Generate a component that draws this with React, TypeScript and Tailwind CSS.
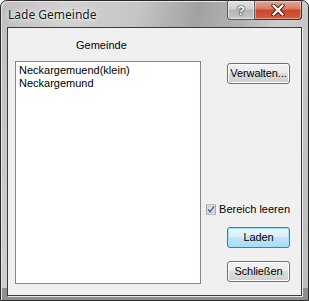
import React from 'react';

const font = { fontFamily: '"Liberation Sans", Arial, sans-serif' };

function WinButton({ label, primary }: { label: string; primary?: boolean }) {
  return (
    <button
      className={
        'flex h-[21px] w-[63px] items-center justify-center whitespace-nowrap rounded-[3px] border text-[11px] tracking-[-0.1px] text-black ' +
        (primary
          ? 'border-[#3c7fb1] bg-[linear-gradient(#eaf6fd_0%,#d9f0fc_45%,#bee6fd_50%,#a7d9f5_100%)] shadow-[inset_0_0_0_1px_#9ee3f8]'
          : 'border-[#707070] bg-[linear-gradient(#f2f2f2_0%,#ebebeb_45%,#dddddd_50%,#cfcfcf_100%)] shadow-[inset_0_0_0_1px_#fcfcfc]')
      }
    >
      {label}
    </button>
  );
}

function Checkbox() {
  return (
    <svg width="13" height="13" viewBox="0 0 13 13">
      <rect x="0.5" y="0.5" width="12" height="12" fill="#f4f4f4" stroke="#8f8f8f" />
      <rect x="2.5" y="2.5" width="8" height="8" fill="#dfe4ea" stroke="#b8c0c8" />
      <path d="M3 6.5 L5.3 9.3 L10.3 2.8" fill="none" stroke="#3f5897" strokeWidth="1.8" />
    </svg>
  );
}

export default function App() {
  return (
    <div className="h-[301px] w-[309px] overflow-hidden" style={font}>
      <div className="flex h-full w-full flex-col rounded-t-[7px] border border-[#2a2a2a] bg-[linear-gradient(to_bottom,transparent_96%,#8f8f8f_96%),linear-gradient(100deg,#bebebe_0%,#d2d2d2_18%,#c6c6c6_38%,#a2a2a2_55%,#b3b3b3_68%,#cdcdcd_78%,#bdbdbd_100%)] shadow-[inset_1px_1px_0_#e6e6e6]">
        {/* title bar */}
        <div className="flex h-[26px] shrink-0 items-start">
          <div
            className="mt-[6px] pl-[7px] text-[12px] leading-[16px] text-[#1a1a1a] [text-shadow:0_0_6px_#ffffff,0_0_3px_#ffffff]"
            style={{ fontFamily: '"Noto Sans", "Open Sans", sans-serif' }}
          >
            Lade Gemeinde
          </div>
          <div className="ml-auto mr-[6px] flex h-[19px]">
            <div className="flex w-[28px] items-center justify-center rounded-bl-[4px] border border-t-0 border-[#5a5a5a] bg-[linear-gradient(#e4e4e4_0%,#cfcfcf_45%,#b4b4b4_50%,#c8c8c8_100%)] shadow-[inset_0_0_0_1px_#ffffff80]">
              <span className="text-[13px] font-bold leading-none text-white [text-shadow:0_0_1px_#333,0_0_1px_#333,0_0_2px_#333]">?</span>
            </div>
            <div className="flex w-[47px] items-center justify-center rounded-br-[4px] border border-l-0 border-t-0 border-[#5a2a20] bg-[linear-gradient(#e8a493_0%,#d77a63_45%,#c7462b_50%,#d65d3e_100%)] shadow-[inset_0_0_0_1px_#ffffff60]">
              <svg width="14" height="12" viewBox="0 0 14 12">
                <path d="M2.5 1.5 L11.5 10.5 M11.5 1.5 L2.5 10.5" stroke="#4a1a10" strokeWidth="4.2" strokeLinecap="round" />
                <path d="M2.5 1.5 L11.5 10.5 M11.5 1.5 L2.5 10.5" stroke="#ffffff" strokeWidth="2.4" strokeLinecap="round" />
              </svg>
            </div>
          </div>
        </div>

        {/* client area */}
        <div className="mx-[6px] mb-[4px] flex flex-1 border border-[#3a3a3a] bg-[#f0f0f0] shadow-[1px_1px_0_#e8e8e8]">
          <div className="ml-[7px] flex flex-col">
            <div className="ml-[61px] mt-[11px] h-[13px] text-[11px] leading-[13px] text-black">Gemeinde</div>
            <div className="mt-[9px] h-[223px] w-[186px] border border-[#828790] bg-white pl-[3px] pt-[2px] text-[11px] leading-[13px] text-black">
              <div>Neckargemuend(klein)</div>
              <div>Neckargemund</div>
            </div>
          </div>
          <div className="ml-[26px] flex w-[63px] flex-col">
            <div className="mt-[35px]">
              <WinButton label="Verwalten..." />
            </div>
            <div className="-ml-[21px] mt-[118px] flex h-[14px] items-center gap-[3px] whitespace-nowrap">
              <Checkbox />
              <span className="text-[11px] leading-[13px] text-black">Bereich leeren</span>
            </div>
            <div className="mt-[11px]">
              <WinButton label="Laden" primary />
            </div>
            <div className="mt-[13px]">
              <WinButton label="Schließen" />
            </div>
          </div>
        </div>
      </div>
    </div>
  );
}
